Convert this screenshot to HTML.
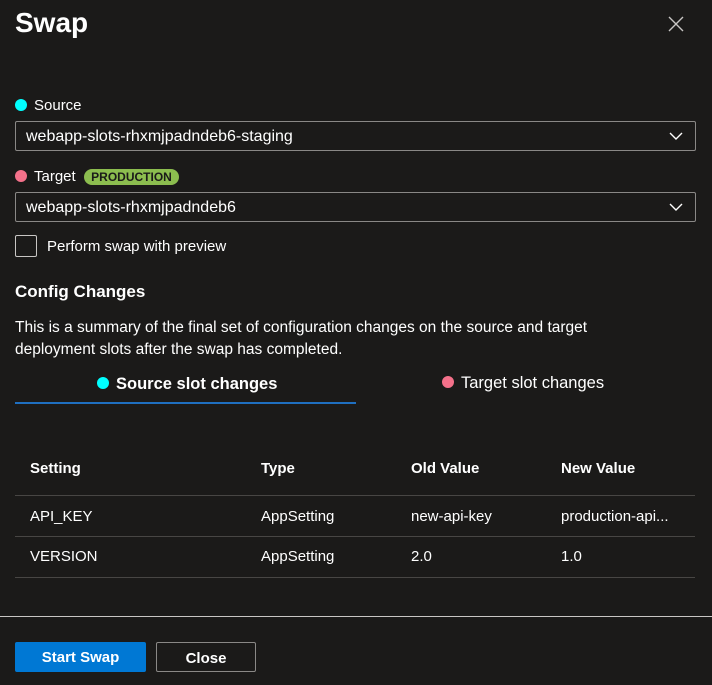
<!DOCTYPE html>
<html><head><style>
body{margin:0;width:712px;height:685px;background:#1b1a19;color:#fff;font-family:"Liberation Sans",sans-serif;position:relative;overflow:hidden}
div,span{position:absolute}
.t{font-size:15px;line-height:20px;white-space:nowrap}
.dot{width:12px;height:12px;border-radius:50%}
.dd{left:15px;width:679px;height:28px;border:1px solid #8a8886;border-radius:2px;background:#1b1a19}
.dd .t{left:10px;top:5px;font-size:16px}
.chev{right:12px;top:9px}
.line{left:15px;width:680px;height:1px;background:#484644}
.h{font-weight:bold}
</style></head><body>
<div class="t" style="left:15px;top:5px;font-size:28px;line-height:36px;font-weight:bold">Swap</div>
<svg style="position:absolute;left:668px;top:16px" width="16" height="16"><path d="M1 1L15 15M15 1L1 15" stroke="#c8c6c4" stroke-width="1.4"/></svg>

<div class="dot" style="left:15px;top:99px;background:#00ffff"></div>
<div class="t" style="left:34px;top:96px">Source</div>
<div class="dd" style="top:121px"><div class="t">webapp-slots-rhxmjpadndeb6-staging</div>
<svg class="chev" style="position:absolute" width="14" height="10"><path d="M1 2L7 8L13 2" stroke="#fff" fill="none" stroke-width="1.4"/></svg></div>

<div class="dot" style="left:15px;top:170px;background:#f4718a"></div>
<div class="t" style="left:34px;top:167px">Target</div>
<div style="left:84px;top:169px;width:95px;height:16px;border-radius:8px;background:#8cbd4f;color:#1b1a19;font-size:12px;font-weight:bold;line-height:16px;text-align:center">PRODUCTION</div>
<div class="dd" style="top:192px"><div class="t">webapp-slots-rhxmjpadndeb6</div>
<svg class="chev" style="position:absolute" width="14" height="10"><path d="M1 2L7 8L13 2" stroke="#fff" fill="none" stroke-width="1.4"/></svg></div>

<div style="left:15px;top:235px;width:20px;height:20px;border:1px solid #c8c6c4;border-radius:2px"></div>
<div class="t" style="left:47px;top:237px">Perform swap with preview</div>

<div class="t h" style="left:15px;top:281px;font-size:17px;line-height:22px">Config Changes</div>
<div class="t" style="left:15px;top:317px;line-height:22px;font-size:15.5px">This is a summary of the final set of configuration changes on the source and target<br>deployment slots after the swap has completed.</div>

<div class="dot" style="left:97px;top:377px;background:#00ffff"></div>
<div class="t" style="left:116px;top:373px;font-size:16.5px;line-height:22px;font-weight:bold">Source slot changes</div>
<div style="left:15px;top:402px;width:341px;height:2px;background:#1f6fc0"></div>
<div class="dot" style="left:442px;top:376px;background:#f4718a"></div>
<div class="t" style="left:461px;top:372px;font-size:16.5px;line-height:22px">Target slot changes</div>

<div class="t h" style="left:30px;top:459px">Setting</div>
<div class="t h" style="left:261px;top:459px">Type</div>
<div class="t h" style="left:411px;top:459px">Old Value</div>
<div class="t h" style="left:561px;top:459px">New Value</div>
<div class="line" style="top:495px"></div>
<div class="t" style="left:30px;top:507px">API_KEY</div>
<div class="t" style="left:261px;top:507px">AppSetting</div>
<div class="t" style="left:411px;top:507px">new-api-key</div>
<div class="t" style="left:561px;top:507px">production-api...</div>
<div class="line" style="top:536px"></div>
<div class="t" style="left:30px;top:547px">VERSION</div>
<div class="t" style="left:261px;top:547px">AppSetting</div>
<div class="t" style="left:411px;top:547px">2.0</div>
<div class="t" style="left:561px;top:547px">1.0</div>
<div class="line" style="top:577px"></div>

<div style="left:0;top:616px;width:712px;height:1px;background:#c8c6c4"></div>
<div style="left:15px;top:642px;width:131px;height:30px;background:#0078d4;border-radius:2px;font-size:15px;font-weight:bold;line-height:32px;text-align:center">Start Swap</div>
<div style="left:156px;top:642px;width:98px;height:28px;border:1px solid #8a8886;border-radius:2px;font-size:15px;font-weight:bold;line-height:31px;text-align:center">Close</div>
</body></html>
